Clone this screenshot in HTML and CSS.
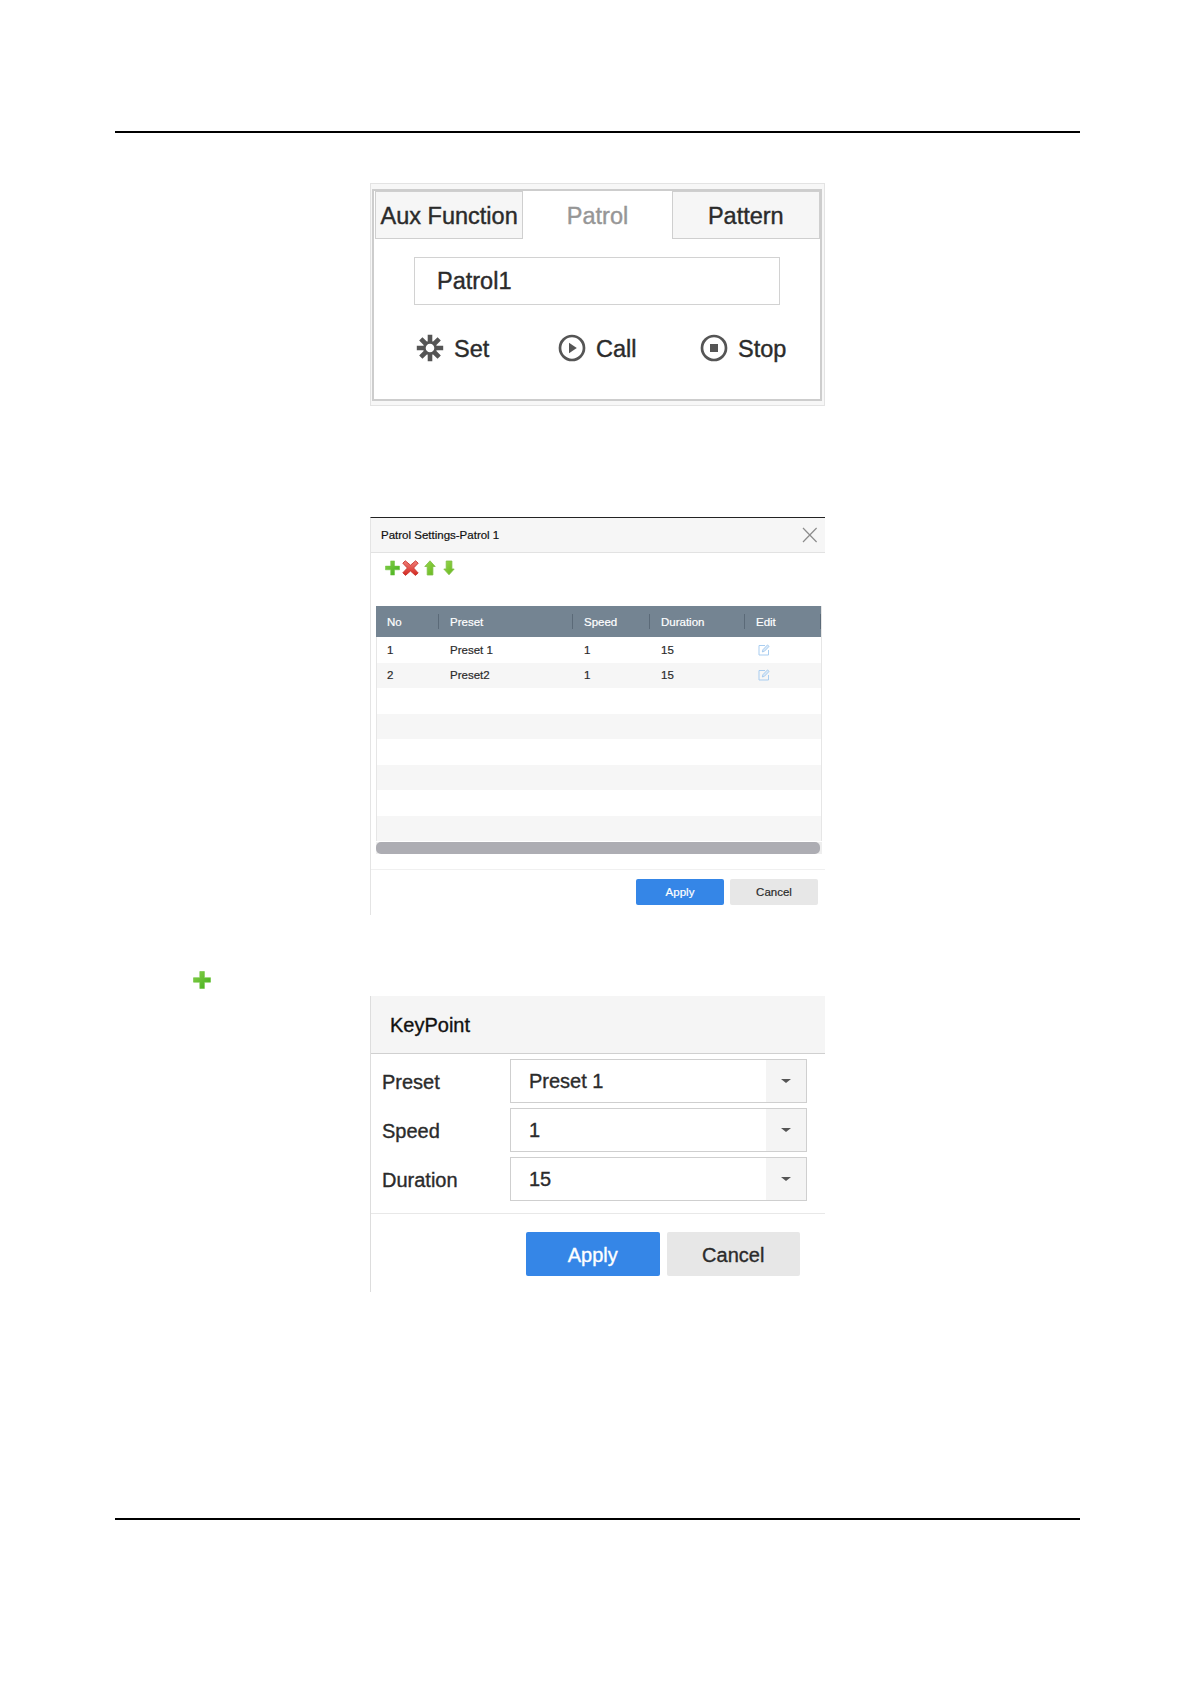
FILE: index.html
```
<!doctype html>
<html lang="en">
	<head>
		<meta charset="UTF-8" />
		<title>Patrol Settings</title>
		<link rel="stylesheet" href="styles.css">
	</head>
	<body>
		<svg class="defs" width="0" height="0">
			<defs>
				<linearGradient id="green" x1="0" y1="0" x2="1" y2="1">
					<stop offset="0" stop-color="#8ad04a"/>
					<stop offset="1" stop-color="#3fae1c"/>
				</linearGradient>
				<linearGradient id="lime" x1="0" y1="0" x2="1" y2="1">
					<stop offset="0" stop-color="#9ad84e"/>
					<stop offset="1" stop-color="#62b41c"/>
				</linearGradient>
				<linearGradient id="red" x1="0" y1="0" x2="0" y2="1">
					<stop offset="0" stop-color="#f0807a"/>
					<stop offset="1" stop-color="#d3271f"/>
				</linearGradient>
				<symbol id="plus" viewBox="0 0 18 18">
					<path d="M6.8 .5h4.6v6.2h6.1v4.5h-6.1v6.3H6.8v-6.3H.5V6.7h6.3z" fill="url(#green)" stroke="#6cc23c" stroke-width=".6"/>
				</symbol>
				<symbol id="edit" viewBox="0 0 12 12">
					<path d="M7 1.5H1v9.5h9.5V6" fill="none" stroke="#a9cdf0"/>
					<path d="M4.3 8l.6-2.3 4.6-4.8 1.6 1.5-4.7 4.9z" fill="#d9eafa" stroke="#9cc3ea" stroke-width=".8"/>
				</symbol>
			</defs>
		</svg>
		<section id="page">
			<hr class="rule">
			<div id="ptz">
				<div class="inner">
					<nav class="tabs">
						<a>Aux Function</a>
						<a class="active">Patrol</a>
						<a>Pattern</a>
					</nav>
					<div class="name">Patrol1</div>
					<div class="tools">
						<span class="set">
							<svg width="28" height="28" viewBox="-14 -14 28 28">
								<g stroke="#555" stroke-width="4.6">
									<path d="M0-13.2V-5M0 13.2V5M-13.2 0H-5M13.2 0H5"/>
									<path d="M-9.2-9.2L-4-4M9.2 9.2L4 4M-9.2 9.2L-4 4M9.2-9.2L4-4"/>
								</g>
								<circle r="5.6" fill="#fff" stroke="#555" stroke-width="2.6"/>
							</svg>
							Set
						</span>
						<span class="call">
							<svg width="28" height="28" viewBox="-14 -14 28 28">
								<circle r="12" fill="none" stroke="#555" stroke-width="2.7"/>
								<path d="M-3-5.2L4.8 0L-3 5.2z" fill="#555"/>
							</svg>
							Call
						</span>
						<span class="stop">
							<svg width="28" height="28" viewBox="-14 -14 28 28">
								<circle r="12" fill="none" stroke="#555" stroke-width="2.7"/>
								<path d="M-4-4H4V4H-4z" fill="#555"/>
							</svg>
							Stop
						</span>
					</div>
				</div>
			</div>
			<div id="patrol">
				<div class="head">
					<span>Patrol Settings-Patrol 1</span>
					<svg width="16" height="16" viewBox="0 0 16 16"><path d="M1 1l13.6 14M14.6 1L1 15" stroke="#8c8c8c" stroke-width="1.2"/></svg>
				</div>
				<div class="icons">
					<svg width="15" height="16"><use href="#plus"/></svg>
					<svg width="17" height="16" viewBox="0 0 17 16"><path d="M3.3 .8L8.5 5.2L13.6 .8L16.2 3.2L11.6 8L16.2 13L13.4 15.4L8.5 11L3.5 15.4L.8 12.8L5.4 8L.8 3.2z" fill="url(#red)" stroke="#c9372f" stroke-width=".9" stroke-linejoin="round"/></svg>
					<svg class="up" width="12" height="16" viewBox="0 0 12 16"><path d="M6 .8L11.2 6.5H8.9V15H3.2V6.5H.8z" fill="url(#lime)" stroke="#7fbf45" stroke-width=".8"/></svg>
					<svg class="down" width="12" height="16" viewBox="0 0 12 16"><path d="M6 14.8L11.2 9H8.9V1H3.2V9H.8z" fill="url(#lime)" stroke="#7fbf45" stroke-width=".8"/></svg>
				</div>
				<div class="table">
					<div class="row th"><span>No</span><span>Preset</span><span>Speed</span><span>Duration</span><span>Edit</span></div>
					<div class="row"><span>1</span><span>Preset 1</span><span>1</span><span>15</span><span><svg width="12" height="12"><use href="#edit"/></svg></span></div>
					<div class="row"><span>2</span><span>Preset2</span><span>1</span><span>15</span><span><svg width="12" height="12"><use href="#edit"/></svg></span></div>
					<div class="row"></div>
					<div class="row"></div>
					<div class="row"></div>
					<div class="row"></div>
					<div class="row"></div>
					<div class="row"></div>
				</div>
				<div class="track"><div class="bar"></div></div>
				<div class="foot">
					<a class="btn apply">Apply</a>
					<a class="btn">Cancel</a>
				</div>
			</div>
			<svg class="add" width="18" height="18"><use href="#plus"/></svg>
			<div id="keypoint">
				<div class="head">KeyPoint</div>
				<div class="form">
					<div class="field"><label>Preset</label><div class="select"><span>Preset 1</span><i></i></div></div>
					<div class="field"><label>Speed</label><div class="select"><span>1</span><i></i></div></div>
					<div class="field"><label>Duration</label><div class="select"><span>15</span><i></i></div></div>
				</div>
				<div class="foot">
					<a class="btn apply">Apply</a>
					<a class="btn">Cancel</a>
				</div>
			</div>
			<hr class="rule bottom">
		</section>
	</body>
</html>
```
FILE: styles.css
```
*{
	margin: 0;
	padding: 0;
	box-sizing: border-box;
}
body{
	background: #fff;
	font-family: "Liberation Sans", Arial, sans-serif;
	color: #2b2b2b;
}
svg{
	display: block;
	flex: none;
}
.defs{
	height: 0;
}
#page{
	width: 1181px;
	height: 1685px;
	padding: 131px 101px 0 115px;
}
.rule{
	height: 2px;
	border: 0;
	background: #000;
}

/* aux / patrol / pattern tabs */
#ptz{
	width: 455px;
	height: 223px;
	margin: 50px 0 0 255px;
	padding: 5px 2px 4px 1px;
	border: 1px solid #e3e3e3;
	background: #f7f7f7;
	font-size: 23.5px;
	-webkit-text-stroke: .4px;
}
#ptz .inner{
	height: 212px;
	border: 2px solid #cdcdcd;
	background: #fff;
}
.tabs{
	display: flex;
	height: 48px;
	padding-left: 1px;
}
.tabs a{
	flex: 1;
	border: 1px solid #cfcfcf;
	background: #f6f6f6;
	text-align: center;
	line-height: 48px;
	white-space: nowrap;
}
.tabs a.active{
	border-color: transparent;
	background: #fff;
	color: #969696;
}
.name{
	width: 366px;
	height: 48px;
	margin: 18px 0 0 40px;
	padding-left: 22px;
	border: 1px solid #d2d2d2;
	line-height: 47px;
}
.tools{
	display: flex;
	height: 28px;
	margin: 29px 0 0 42px;
	line-height: 31px;
}
.tools span{
	display: flex;
	gap: 10px;
	width: 142px;
}
.tools .stop{
	width: auto;
}

/* patrol list window */
#patrol{
	width: 455px;
	height: 398px;
	margin: 111px 0 0 255px;
	border-top: 1px solid #222;
	border-left: 1px solid #e4e4e4;
	font-size: 11.5px;
	-webkit-text-stroke: .2px;
}
#patrol .head{
	display: flex;
	justify-content: space-between;
	align-items: center;
	height: 35px;
	padding: 0 7px 0 10px;
	border-bottom: 1px solid #e2e2e2;
	background: #f6f6f6;
	color: #111;
}
.icons{
	display: flex;
	height: 53px;
	padding: 7px 0 0 14px;
}
.icons svg + svg{
	margin-left: 2px;
}
.icons svg.up,
.icons svg.down{
	margin-left: 5px;
}
.icons svg.down{
	margin-left: 7px;
}
.table{
	width: 446px;
	margin-left: 5px;
	border-left: 1px solid #e6e6e6;
	border-right: 1px solid #e6e6e6;
}
.row{
	display: grid;
	grid-template-columns: 62px 134px 77px 95px 1fr;
	align-items: center;
	height: 25.5px;
}
.row:nth-child(odd){
	background: #f6f6f6;
}
.row span{
	padding-left: 11px;
}
.row span:first-child{
	padding-left: 10px;
}
.row span:last-child{
	padding-left: 13px;
}
.row.th{
	height: 31px;
	margin: 0 0 0 -1px;
	padding-left: 1px;
	background: #748492;
	color: #fff;
}
.row.th span{
	height: 15px;
	line-height: 16px;
	border-right: 1px solid #5b6a78;
}
.row.th span:last-child{
	padding-left: 11px;
}
.track{
	width: 446px;
	height: 12px;
	margin: 1px 0 0 5px;
	background: #eee;
}
.bar{
	width: 444px;
	height: 12px;
	border-radius: 5px;
	background: #adadb3;
}
.foot{
	display: flex;
	justify-content: flex-end;
}
.btn{
	border-radius: 2px;
	background: #e7e7e7;
	text-align: center;
}
.btn.apply{
	background: #3586e7;
	color: #fff;
}
#patrol .foot{
	gap: 6px;
	margin-top: 15px;
	padding: 9px 7px 0 0;
	border-top: 1px solid #f0f0f0;
}
#patrol .btn{
	width: 88px;
	height: 26px;
	line-height: 26px;
}

.add{
	margin: 56px 0 0 78px;
}

/* key point window */
#keypoint{
	width: 455px;
	height: 296px;
	margin: 7px 0 0 255px;
	border-left: 1px solid #ddd;
	font-size: 20px;
	-webkit-text-stroke: .35px;
}
#keypoint .head{
	height: 58px;
	padding-left: 19px;
	border-bottom: 1px solid #d0d0d0;
	background: #f5f5f5;
	color: #111;
	line-height: 59px;
}
.form{
	display: flex;
	flex-direction: column;
	gap: 5px;
	padding: 5px 18px 12px 11px;
}
.field{
	display: flex;
	height: 44px;
}
.field label{
	width: 128px;
	line-height: 47px;
}
.select{
	display: flex;
	flex: 1;
	border: 1px solid #cfcfcf;
	line-height: 43px;
}
.select span{
	flex: 1;
	padding-left: 18px;
}
.select i{
	display: flex;
	justify-content: center;
	align-items: center;
	width: 40px;
	padding-right: 1px;
	background: #f4f4f4;
}
.select i:after{
	content: "";
	border: 5px solid transparent;
	border-top: 4px solid #555;
	border-bottom: 0;
}
#keypoint .foot{
	gap: 7px;
	padding: 18px 25px 0 0;
	border-top: 1px solid #e8e8e8;
}
#keypoint .btn{
	width: 133.5px;
	height: 44px;
	line-height: 46px;
}
.rule.bottom{
	margin-top: 226px;
}
```
